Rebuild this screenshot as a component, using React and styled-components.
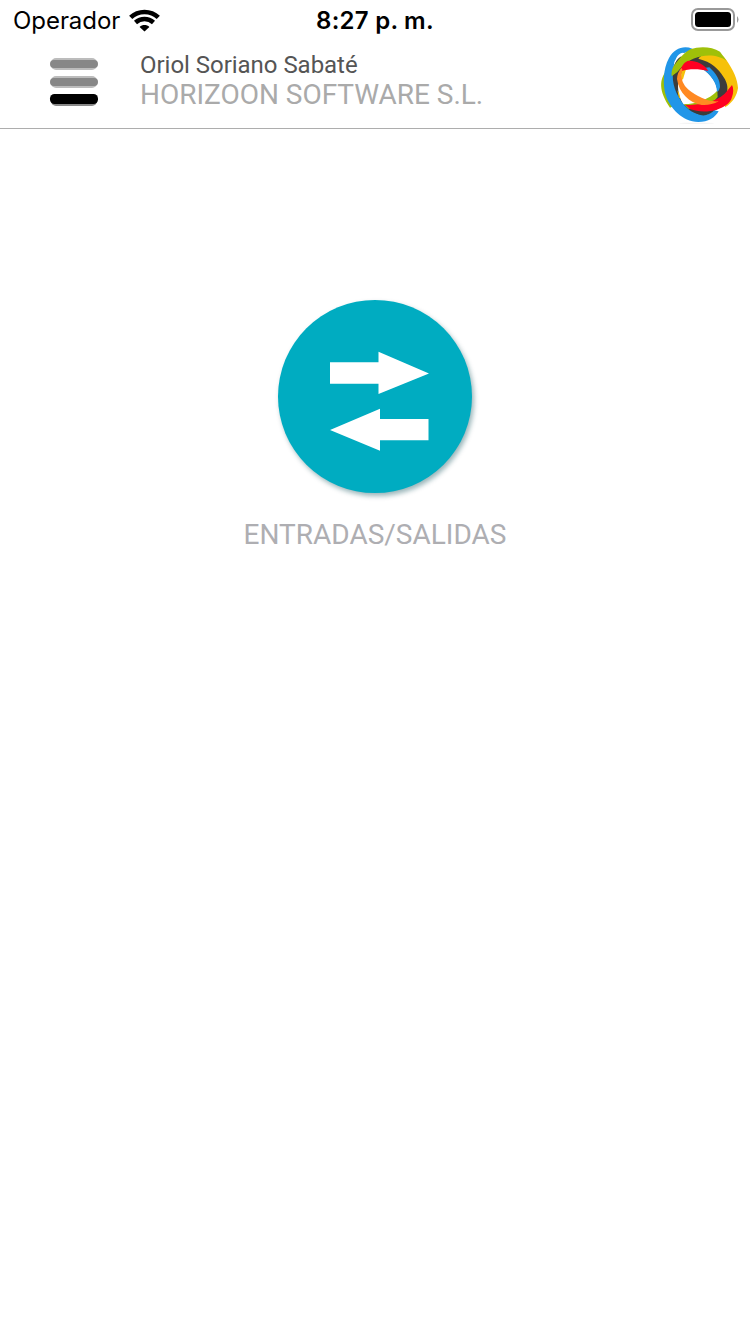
import React from "react";
import styled, { createGlobalStyle } from "styled-components";

const GlobalStyle = createGlobalStyle`
  * { box-sizing: border-box; }
  html, body, #root { margin: 0; height: 100%; background: #fff; }
`;

const Screen = styled.div`
  display: flex;
  flex-direction: column;
  min-height: 1334px;
  width: 750px;
  background: #fff;
  font-family: Roboto, "Liberation Sans", sans-serif;
`;

const StatusBar = styled.div`
  display: grid;
  grid-template-columns: 1fr auto 1fr;
  align-items: center;
  height: 40px;
  padding: 0 11px 0 13px;
  font-family: Inter, "Liberation Sans", sans-serif;
  color: #000;
`;

const Carrier = styled.div`
  display: flex;
  align-items: center;
  gap: 9px;
  font-size: 24px;
  line-height: 38px;
  letter-spacing: -0.05px;
`;

const CarrierName = styled.span`
  padding-top: 2px;
`;

const Clock = styled.div`
  padding: 2px 2px 0 0;
  font-size: 24px;
  line-height: 38px;
  font-weight: 600;
  letter-spacing: 0.25px;
`;

const BatterySlot = styled.div`
  display: flex;
  justify-content: flex-end;
`;

const Header = styled.header`
  display: flex;
  align-items: flex-start;
  height: 89px;
  padding: 0 5px 0 48px;
  border-bottom: 1px solid #adadad;
`;

const MenuButton = styled.button`
  display: flex;
  width: 52px;
  margin: 16px 40px 0 0;
  padding: 0;
  border: 0;
  background: none;
`;

const Identity = styled.div`
  flex: 1;
  padding-top: 10px;
`;

const UserName = styled.div`
  font-size: 24px;
  line-height: 30px;
  letter-spacing: -0.03px;
  color: #555;
`;

const Company = styled.div`
  font-size: 28px;
  line-height: 30px;
  letter-spacing: -0.02px;
  color: #aaa;
`;

const LogoSlot = styled.div`
  display: flex;
  padding-top: 2px;
`;

const Content = styled.main`
  display: flex;
  flex-direction: column;
  align-items: center;
  padding-top: 171px;
`;

const RoundButton = styled.button`
  display: flex;
  align-items: flex-start;
  justify-content: flex-start;
  width: 194px;
  height: 193px;
  padding: 51px 0 0 51px;
  border: 0;
  border-radius: 50%;
  background: #00acc1;
  box-shadow: 2px 3px 5px rgba(0, 70, 80, 0.4);
`;

const ButtonLabel = styled.div`
  margin-top: 24px;
  font-size: 28px;
  line-height: 36px;
  color: #aeaeb2;
`;

const WifiIcon = () => (
  <svg width="31" height="24" viewBox="0 0 31 24" fill="none" stroke="#000" strokeWidth="4.6">
    <path d="M1.7 9.4C9.2 2.1 21.8 2.1 29.3 9.4" />
    <path d="M6.5 14.5C11.7 9.9 19.3 9.9 24.5 14.5" />
    <path d="M10.6 18.9C13.3 16.4 17.7 16.4 20.4 18.9L15.5 23.4Z" fill="#000" stroke="none" />
  </svg>
);

const BatteryIcon = () => (
  <svg width="48" height="24" viewBox="0 0 48 24">
    <rect x="1" y="1" width="42" height="21" rx="6" fill="none" stroke="#999" strokeWidth="2" />
    <rect x="4" y="4" width="36" height="15" rx="3.5" fill="#000" />
    <path d="M46 8Q49 11.5 46 15Z" fill="#999" />
  </svg>
);

const MenuIcon = () => (
  <svg width="52" height="52" viewBox="0 0 52 52">
    <rect x="3" y="2" width="46" height="12" rx="5" fill="#bcbcbc" />
    <rect x="2" y="4" width="48" height="8" rx="4" fill="#878787" />
    <rect x="3" y="20" width="46" height="12" rx="5" fill="#bcbcbc" />
    <rect x="2" y="22" width="48" height="8" rx="4" fill="#878787" />
    <rect x="3" y="39" width="46" height="11" rx="5" fill="#888" />
    <rect x="2" y="38" width="48" height="10" rx="4.5" fill="#000" />
  </svg>
);

const Logo = () => (
  <svg width="90" height="84" viewBox="0 0 270 252">
    <ellipse cx="125" cy="244" rx="52" ry="2" fill="#f3f3f3" />
    <path fillRule="evenodd" fill="#3c3c3c" d="M58 68C66 45 120 25 158 38C195 60 232 110 228 150C222 185 190 200 175 208C145 228 110 222 86 205C45 170 38 100 58 68ZM90 80L142 80C168 98 186 122 187 146C168 172 145 184 125 187L86 188C74 172 69 152 69 130C72 105 80 92 90 80Z" />
    <path fill="#2196e8" d="M141 79L163 76C184 95 196 116 195 135Q193 147 186 151C186 122 166 98 141 79Z" />
    <path fill="#9fc009" d="M86 187C125 185 160 173 187 147L188 165C170 190 130 200 100 200ZM36 84C12 112 11 147 45 197L60 190Z" />
    <path fill="#f6c10a" d="M130 50C150 26 195 24 214 54C235 85 248 112 249 138C246 160 234 182 210 196L212 160C220 145 220 125 205 104C190 80 170 60 130 50ZM79 82H93L84 112L78 114ZM67 144L72 152L77 172L71 166Z" />
    <path fill="#2196e8" d="M112 20C85 10 58 19 42 48C24 80 22 130 34 165C48 200 80 238 130 240C160 240 180 227 191 208L176 205C162 225 118 225 88 190C62 158 50 122 54 90L58 60C66 40 86 30 112 27Z" />
    <path fill="#fff" d="M64 48Q70 34 84 32L93 35L78 46L62 58Z" />
    <path fill="#3c3c3c" d="M79 43Q62 52 60 70L76 56Z" />
    <path fill="#9fc009" d="M50 103C48 80 58 68 70 54C83 38 95 28 106 22C135 12 170 14 195 29L215 57C197 42 165 37 140 43C105 50 88 66 67 90Z" />
    <path fill="#3c3c3c" d="M112 204C135 211 157 211 178 205C158 225 132 226 112 204Z" />
    <path fill="#ff0021" d="M76 82C83 68 90 58 102 56C125 56 150 68 160 87C130 80 105 80 78 87ZM90 188C135 192 195 178 218 145L231 129C236 138 236 153 231 165C226 185 205 197 185 203C155 212 125 208 106 202Z" />
    <path fill="#ff8922" d="M79 78Q67 91 66 111C72 153 102 182 140 189Q167 191 191 178C160 181 126 163 99 142Q78 123 79 97L82 82Z" />
  </svg>
);

const TransferIcon = () => (
  <svg width="102" height="102" viewBox="0 0 102 102" fill="#fff">
    <path d="M1 11.2H49.5V.7L100 22.4L49.5 43V32.8H1Z" />
    <path d="M1 79L51 57.7V68H99.5V89.2H51V99.7Z" />
  </svg>
);

export default function App() {
  return (
    <>
      <GlobalStyle />
      <Screen>
        <StatusBar>
          <Carrier><CarrierName>Operador</CarrierName><WifiIcon /></Carrier>
          <Clock>8:27 p. m.</Clock>
          <BatterySlot><BatteryIcon /></BatterySlot>
        </StatusBar>
        <Header>
          <MenuButton aria-label="Menú"><MenuIcon /></MenuButton>
          <Identity>
            <UserName>Oriol Soriano Sabaté</UserName>
            <Company>HORIZOON SOFTWARE S.L.</Company>
          </Identity>
          <LogoSlot><Logo /></LogoSlot>
        </Header>
        <Content>
          <RoundButton aria-label="Entradas/Salidas"><TransferIcon /></RoundButton>
          <ButtonLabel>ENTRADAS/SALIDAS</ButtonLabel>
        </Content>
      </Screen>
    </>
  );
}
